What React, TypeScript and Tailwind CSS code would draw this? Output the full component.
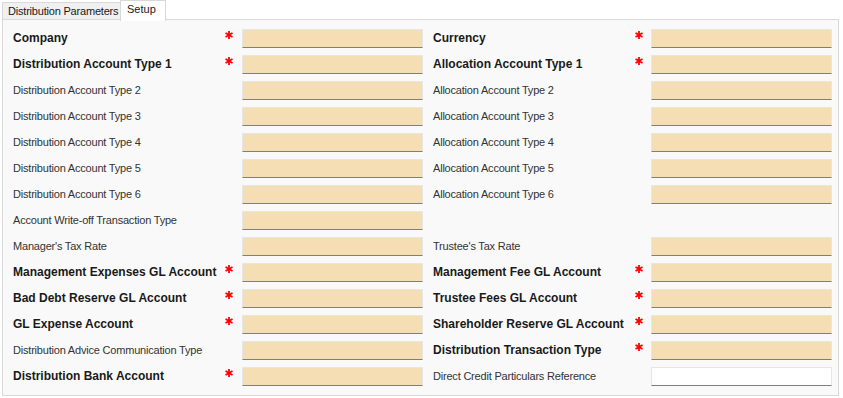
import React from "react";

type Field = { label: string; req?: boolean; bold?: boolean; white?: boolean } | null;

const rows: [Field, Field][] = [
  [{ label: "Company", req: true, bold: true }, { label: "Currency", req: true, bold: true }],
  [{ label: "Distribution Account Type 1", req: true, bold: true }, { label: "Allocation Account Type 1", req: true, bold: true }],
  [{ label: "Distribution Account Type 2" }, { label: "Allocation Account Type 2" }],
  [{ label: "Distribution Account Type 3" }, { label: "Allocation Account Type 3" }],
  [{ label: "Distribution Account Type 4" }, { label: "Allocation Account Type 4" }],
  [{ label: "Distribution Account Type 5" }, { label: "Allocation Account Type 5" }],
  [{ label: "Distribution Account Type 6" }, { label: "Allocation Account Type 6" }],
  [{ label: "Account Write-off Transaction Type" }, null],
  [{ label: "Manager's Tax Rate" }, { label: "Trustee's Tax Rate" }],
  [{ label: "Management Expenses GL Account", req: true, bold: true }, { label: "Management Fee GL Account", req: true, bold: true }],
  [{ label: "Bad Debt Reserve GL Account", req: true, bold: true }, { label: "Trustee Fees GL Account", req: true, bold: true }],
  [{ label: "GL Expense Account", req: true, bold: true }, { label: "Shareholder Reserve GL Account", req: true, bold: true }],
  [{ label: "Distribution Advice Communication Type" }, { label: "Distribution Transaction Type", req: true, bold: true }],
  [{ label: "Distribution Bank Account", req: true, bold: true }, { label: "Direct Credit Particulars Reference", white: true }],
];

function Star() {
  return (
    <svg width="8" height="8" viewBox="0 0 8 8" className="block">
      <g stroke="#ff0000" strokeWidth="1.8" strokeLinecap="butt">
        <line x1="4" y1="0" x2="4" y2="8" />
        <line x1="0.5" y1="2" x2="7.5" y2="6" />
        <line x1="0.5" y1="6" x2="7.5" y2="2" />
      </g>
    </svg>
  );
}

function Input({ white }: { white?: boolean }) {
  return (
    <div
      className={
        "h-[19px] w-[181px] border border-[#e6e6e6] border-b-[#7f7f7f] " +
        (white ? "bg-white" : "bg-[#f5deb3]")
      }
    />
  );
}

function Cell({ f, labelW, starPad }: { f: Field; labelW: string; starPad: string }) {
  if (!f) return <div className="flex-none w-[418px]" />;
  return (
    <div className="flex items-center">
      <div
        className={
          labelW +
          " flex-none whitespace-nowrap " +
          (f.bold
            ? "font-bold text-[12px] text-[#1a1a1a]"
            : "text-[11px] tracking-[-0.2px] text-[#333333]")
        }
      >
        {f.label}
      </div>
      <div className={"w-[19px] flex-none flex items-center mb-[7px] " + starPad}>
        {f.req ? <Star /> : null}
      </div>
      <Input white={f.white} />
    </div>
  );
}

export default function App() {
  return (
    <div
      className="w-[843px] h-[398px] bg-white relative"
      style={{ fontFamily: '"Liberation Sans", Arial, sans-serif' }}
    >
      <div className="flex h-[19px] pl-[2px] items-end">
        <div className="h-[17px] w-[119px] bg-[#f0f0f0] border border-[#d9d9d9] border-b-0 pl-[5px] text-[11px] tracking-[-0.2px] text-[#1a1a1a] leading-[16px] whitespace-nowrap">
          Distribution Parameters
        </div>
        <div className="relative z-10 h-[21px] w-[46px] -mb-[2px] bg-white border border-[#d9d9d9] border-b-0 pl-[6px] text-[11px] text-[#1a1a1a] leading-[17px] -ml-[1px] whitespace-nowrap">
          Setup
        </div>
      </div>
      <div className="ml-[2px] w-[837px] h-[377px] bg-[#f9f9f9] border border-[#d9d9d9] pt-[5px] pl-[10px]">
        {rows.map((r, i) => (
          <div key={i} className="flex items-center h-[26px]">
            <Cell f={r[0]} labelW="w-[210px]" starPad="pl-[2px]" />
            <div className="w-[10px] flex-none" />
            <Cell f={r[1]} labelW="w-[199px]" starPad="pl-[3px]" />
          </div>
        ))}
      </div>
    </div>
  );
}
